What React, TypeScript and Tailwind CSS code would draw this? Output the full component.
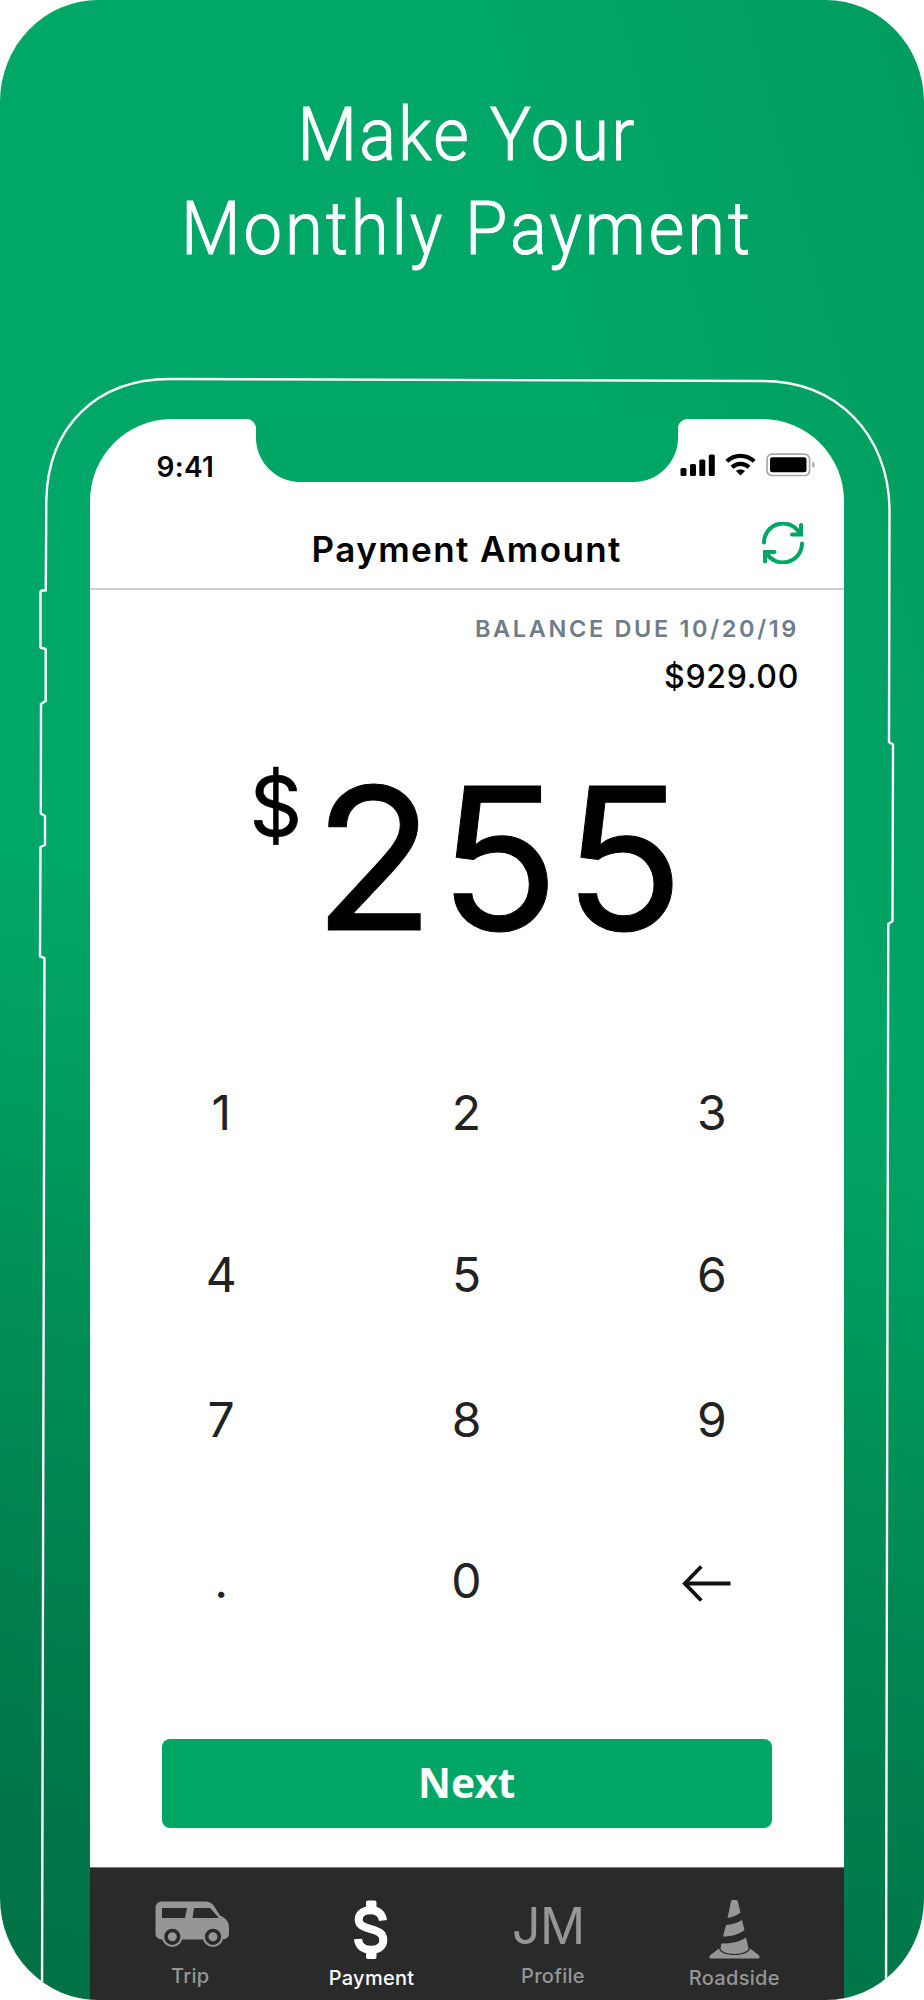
import type { ReactNode } from "react";

function PhoneOutline() {
  return (
    <svg className="pointer-events-none absolute left-0 top-0" width="924" height="2000" viewBox="0 0 924 2000" fill="none" stroke="#fff" strokeWidth="2.4" strokeLinejoin="round">
      <path d="M42 2001L44.500 959L44.300 958L40 956.500L40.500 847L45 845V816L40.800 813.500L41 704L45.700 701V650L45.300 649L40.500 647.500V591.500L41.500 590.500H45.800L46.300 500C48 427 96 379 170 379L762 381C838 381 888 435 889.500 508L889 742L893 744.500L892.500 921L888.300 924L886 2001" />
    </svg>
  );
}

function Notch() {
  return (
    <svg className="absolute left-[157px] top-[-1px]" width="440" height="65" viewBox="0 0 440 65">
      <path d="M0 0V1C5 1 9 6 9 10V20C9 44 29 64 53 64H387C411 64 431 44 431 20V10C431 6 435 1 441 1V0Z" fill="#00a664" />
    </svg>
  );
}

function StatusIcons() {
  return (
    <svg width="136" height="24" viewBox="0 0 136 24">
      <rect x="0.5" y="15" width="6" height="8" rx="1.5" />
      <rect x="10" y="11" width="6" height="12" rx="1.5" />
      <rect x="19.3" y="6.5" width="6" height="16.5" rx="1.5" />
      <rect x="28.8" y="1.5" width="6" height="21.5" rx="1.5" />
      <g fill="none" stroke="#000" strokeWidth="4.2">
        <path d="M46.800 8.300C54.500 1 66.500 1 74.200 8.300" />
        <path d="M52 14.300C57 9.600 64 9.600 69 14.300" />
      </g>
      <path d="M56 18C58.500 16 62.500 16 65 18L60.500 22.500Z" />
      <rect x="87" y="1.2" width="42.6" height="21.3" rx="5" fill="none" stroke="#a9a7a8" strokeWidth="1.7" />
      <rect x="90" y="4.3" width="36.5" height="15" rx="2.5" />
      <path d="M132.300 8.500C135.500 9.500 135.500 14 132.300 15Z" fill="#a9a7a8" />
    </svg>
  );
}

function RefreshIcon() {
  return (
    <svg width="42" height="42" viewBox="0 0 42 42" fill="none" stroke="#00a664" strokeWidth="4" strokeLinecap="round">
      <path d="M2 20.500A19 19 0 0 1 38 12" />
      <path d="M40 21.500A19 19 0 0 1 4 30" />
      <path d="M39 3V12.500H30" strokeLinejoin="miter" />
      <path d="M3 39.500V30H12.500" strokeLinejoin="miter" />
    </svg>
  );
}

function VanIcon() {
  return (
    <svg width="74" height="47" viewBox="0 0 74 47">
      <path fill="#969696" d="M7 0.500H50C54 0.500 57 2 59 5L65 14.500C71 17 74 21 74 27V32C74 36 72 38 67.500 38.500H7C2.500 38 0.500 36 0.500 32V7C0.500 3 3 0.500 7 0.500Z" />
      <path fill="#2a2a2a" d="M7 7H32L30 17H7ZM39 7H54C55 7 55.500 7.300 56 8L64 17H37.500Z" />
      <circle cx="17.3" cy="35.8" r="10.2" fill="#969696" />
      <circle cx="58" cy="35.8" r="10.2" fill="#969696" />
      <circle cx="17.3" cy="35.8" r="6.3" fill="#969696" stroke="#2a2a2a" strokeWidth="3.6" />
      <circle cx="58" cy="35.8" r="6.3" fill="#969696" stroke="#2a2a2a" strokeWidth="3.6" />
    </svg>
  );
}

function DollarIcon() {
  return (
    <svg width="34" height="60" viewBox="0 0 34 60">
      <rect x="12" y="0.5" width="10.5" height="10" rx="2" fill="#fff" />
      <rect x="12" y="49" width="10.5" height="10" rx="2" fill="#fff" />
      <path d="M29 20.500C28 14 24 10.300 17 10.300C9.500 10.300 4.700 13.500 4.700 19.500C4.700 25 9 27 16 28.800C24.500 31 29.300 33.500 29.300 40C29.300 46.500 24.500 49.800 17 49.800C9 49.800 4.600 46 4 39" fill="none" stroke="#fff" strokeWidth="8" />
    </svg>
  );
}

function ConeIcon() {
  return (
    <svg width="51" height="59" viewBox="0 0 51 59" fill="#969696">
      <path d="M22.800 0H27C28 0 28.500 0.500 28.800 1.500L31.500 12.500C28 15.500 23.500 17 18.500 18L22 1.500C22.200 0.500 22.500 0 22.800 0Z" />
      <path d="M17 25C23 24.500 28.500 23 33 20L35.500 30C30 34.500 22 36.500 14 36.500Z" />
      <path d="M12.500 43.500C22 43.500 31 42 37 37.500L39.500 48.500C39.500 51 33 54 25.500 54C17.500 54 11.500 51 11.500 48.500Z" />
      <path d="M10 48.500C10.500 52.500 17 55 25.500 55C34 55 40.500 52.500 41 48.500L49 54.500C50.500 55.500 50.500 56 50.500 58.500H0.500C0.500 56 0.500 55.500 2 54.500Z" />
    </svg>
  );
}

function ArrowIcon() {
  return (
    <svg width="49" height="39" viewBox="0 0 49 39" fill="none" stroke="#111" strokeWidth="3.8">
      <path d="M2 19.500H48.500" />
      <path d="M19.300 2.500L2.800 19.500L19.300 36.500" />
    </svg>
  );
}

const keys = ["1", "2", "3", "4", "5", "6", "7", "8", "9", ".", "0"];

function Tab({ label, labelClass, children }: { label: string; labelClass: string; children: ReactNode }) {
  return (
    <div className="flex flex-1 flex-col items-center">
      <div className="flex h-[67px] w-full items-start justify-center">{children}</div>
      <span className={`text-[20px] font-medium leading-6 ${labelClass}`}>{label}</span>
    </div>
  );
}

export default function App() {
  return (
    <div className="h-[2000px] w-[924px] bg-white font-['Inter',sans-serif]">
      <div className="relative flex h-full flex-col overflow-hidden rounded-[98px/102px] bg-[linear-gradient(192deg,#00a66400_47%,#00a162_54%,#009b5e_58.500%,#009157_66.500%,#008752_74%,#007e4c_82.500%,#007748_90%,#007145_100%),linear-gradient(75deg,#00a766_68%,#009c5e_100%)]">
        <h1 className="h-[419px] pl-[10px] pt-[88px] text-center font-['Roboto',sans-serif] text-[74px] font-light leading-[93.500px] text-white [-webkit-text-stroke:1px_white]">
          <span className="block origin-center scale-x-[.93] tracking-[2.200px]">Make Your</span>
          <span className="block origin-center scale-x-[.93] tracking-[3.100px]">Monthly Payment</span>
        </h1>
        <PhoneOutline />

        <main className="relative ml-[89.500px] flex h-[1581px] w-[754.500px] flex-col overflow-hidden rounded-t-[82px] bg-white">
          <Notch />
          <div className="flex h-[86px] items-start justify-between pl-[67px] pr-[28px] pt-[34px]">
            <span className="text-[28px] font-semibold leading-[29px] tracking-[.3px]">9:41</span>
            <StatusIcons />
          </div>
          <header className="relative flex h-[85px] items-start justify-center border-b-2 border-[#d0d0d0] pt-[24px]">
            <h2 className="text-[35px] font-semibold leading-[40px] tracking-[1.400px]">Payment Amount</h2>
            <div className="absolute right-[40px] top-[17px]"><RefreshIcon /></div>
          </header>

          <section className="flex flex-col items-end pr-[45px]">
            <p className="mt-[24px] text-[23.500px] font-semibold leading-[30px] tracking-[2.650px] text-[#6f7d8b]">BALANCE DUE 10/20/19</p>
            <p className="mt-[15px] text-[32px] font-medium leading-[36px] tracking-[.7px]">$929.00</p>
          </section>

          <section className="flex h-[337px] items-start pl-[160px] pt-[54px]">
            <span className="w-[64px] pt-[16px] text-[82px] leading-[84px] [-webkit-text-stroke:0.6px_black]">$</span>
            <span className="whitespace-nowrap text-[198px] leading-[218px] tracking-[4.500px] [-webkit-text-stroke:1px_black]">255</span>
          </section>

          <section className="ml-[9px] grid w-[736px] grid-cols-3 grid-rows-[162px_161px_129px_193px] text-[48px] text-[#222]">
            {keys.map((key) => (
              <button key={key} className="flex items-center justify-center">{key}</button>
            ))}
            <button className="flex items-center justify-center pr-[10px] pt-[6px]" aria-label="Delete"><ArrowIcon /></button>
          </section>

          <button className="mx-[72px] mt-[62px] h-[89px] shrink-0 rounded-[8px] bg-[#00a664] font-['Noto_Sans',sans-serif] text-[40.500px] font-bold text-white">Next</button>

          <nav className="mt-auto flex h-[133px] shrink-0 border-t border-[#777] bg-[#2a2a2a] pl-[10px] pr-[19px] pt-[32px] text-[#969696]">
            <Tab label="Trip" labelClass="-mt-[3px] tracking-[.3px]"><div className="pl-[3px] pt-[1px]"><VanIcon /></div></Tab>
            <Tab label="Payment" labelClass="-mt-px text-white tracking-[.3px]"><div className="pr-[2px]"><DollarIcon /></div></Tab>
            <Tab label="Profile" labelClass="-mt-[3px] tracking-[.3px]"><span className="pr-[9px] text-[50px] font-normal leading-[52px] tracking-[-.5px]">JM</span></Tab>
            <Tab label="Roadside" labelClass="-mt-px tracking-[.3px]"><ConeIcon /></Tab>
          </nav>
        </main>
      </div>
    </div>
  );
}
